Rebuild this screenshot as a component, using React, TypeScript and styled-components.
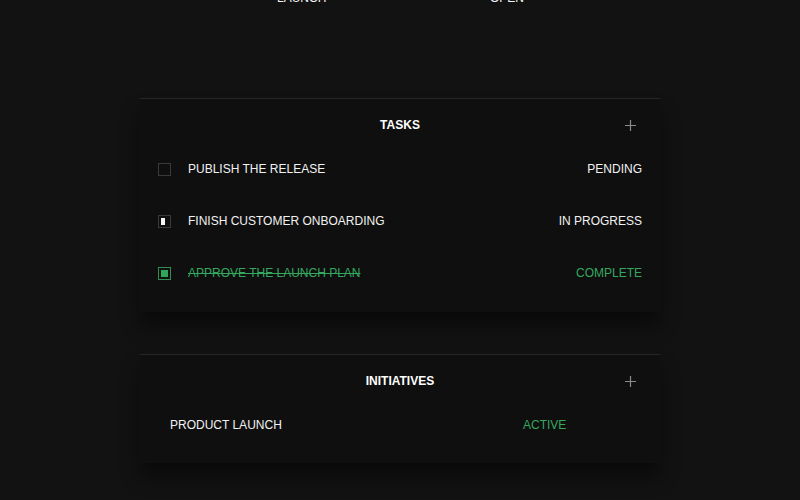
import React from 'react'
import styled, { createGlobalStyle } from 'styled-components'

const GlobalStyle = createGlobalStyle`
  html, body {
    margin: 0;
    padding: 0;
    background: #121212;
    color: #f2f2f2;
    font-family: "Liberation Sans", Arial, sans-serif;
    overflow: hidden;
  }
  * {
    box-sizing: border-box;
  }
`

const Page = styled.div`
  width: 520px;
  margin: 0 auto;
  display: flex;
  flex-direction: column;
`

const CutRow = styled.div`
  display: grid;
  grid-template-columns: 213px 1fr;
  padding-left: 137px;
  margin-top: -9px;
  height: 14px;
  font-size: 12px;
  line-height: 14px;
  margin-bottom: 93px;
`

const Card = styled.section`
  background: #0f0f0f;
  border-top: 1px solid #262626;
  box-shadow: 0 14px 18px rgba(0, 0, 0, 0.45);
  margin-bottom: 42px;
`

const Header = styled.div`
  position: relative;
  height: 50px;
  padding-top: 2px;
  display: flex;
  align-items: center;
  justify-content: center;
`

const Title = styled.h2`
  margin: 0;
  font-size: 12px;
  font-weight: 700;
  color: #ffffff;
`

const AddButton = styled.button`
  position: absolute;
  right: 24px;
  top: 20px;
  width: 12px;
  height: 12px;
  padding: 0;
  border: 0;
  background: none;
  display: flex;
  align-items: center;
  justify-content: center;
`

const List = styled.ul<{ $bottom: number }>`
  list-style: none;
  margin: 0;
  padding: 0 18px ${(p) => p.$bottom}px 18px;
  display: flex;
  flex-direction: column;
  gap: 14px;
`

const TaskRow = styled.li`
  height: 38px;
  padding-top: 2px;
  display: flex;
  align-items: center;
  font-size: 12px;
`

type Status = 'pending' | 'progress' | 'complete'

const Check = styled.span<{ $status: Status }>`
  width: 13px;
  height: 13px;
  flex: none;
  border: 1px solid ${(p) => (p.$status === 'complete' ? '#2f8f52' : '#3a3a3a')};
  padding: 2px;
  margin-right: 17px;
  display: flex;
  &::after {
    content: '';
    display: block;
    height: 100%;
    width: ${(p) => (p.$status === 'progress' ? '50%' : p.$status === 'complete' ? '100%' : '0')};
    background: ${(p) => (p.$status === 'complete' ? '#2fa55a' : '#f5f5f5')};
  }
`

const Label = styled.span<{ $done?: boolean }>`
  flex: 1;
  color: ${(p) => (p.$done ? '#35a860' : '#f2f2f2')};
  text-decoration: ${(p) => (p.$done ? 'line-through' : 'none')};
`

const StatusText = styled.span<{ $green?: boolean }>`
  color: ${(p) => (p.$green ? '#35a860' : '#f2f2f2')};
`

const InitRow = styled.li`
  height: 38px;
  padding-top: 2px;
  display: grid;
  grid-template-columns: 353px 1fr;
  align-items: center;
  padding-left: 12px;
  padding-right: 12px;
  font-size: 12px;
`

const Plus = () => (
  <svg width="11" height="11" viewBox="0 0 11 11">
    <path d="M5.5 0v11M0 5.5h11" stroke="#8a8a8a" strokeWidth="1.2" />
  </svg>
)

const tasks: { label: string; status: Status; text: string }[] = [
  { label: 'PUBLISH THE RELEASE', status: 'pending', text: 'PENDING' },
  { label: 'FINISH CUSTOMER ONBOARDING', status: 'progress', text: 'IN PROGRESS' },
  { label: 'APPROVE THE LAUNCH PLAN', status: 'complete', text: 'COMPLETE' },
]

const App: React.FC = () => {
  return (
    <>
      <GlobalStyle />
      <Page>
        <CutRow>
          <span>LAUNCH</span>
          <span>OPEN</span>
        </CutRow>
        <Card>
          <Header>
            <Title>TASKS</Title>
            <AddButton aria-label="Add task">
              <Plus />
            </AddButton>
          </Header>
          <List $bottom={21}>
            {tasks.map((t) => (
              <TaskRow key={t.label}>
                <Check $status={t.status} />
                <Label $done={t.status === 'complete'}>{t.label}</Label>
                <StatusText $green={t.status === 'complete'}>{t.text}</StatusText>
              </TaskRow>
            ))}
          </List>
        </Card>
        <Card>
          <Header>
            <Title>INITIATIVES</Title>
            <AddButton aria-label="Add initiative">
              <Plus />
            </AddButton>
          </Header>
          <List $bottom={20}>
            <InitRow>
              <span>PRODUCT LAUNCH</span>
              <StatusText $green>ACTIVE</StatusText>
            </InitRow>
          </List>
        </Card>
      </Page>
    </>
  )
}

export default App
